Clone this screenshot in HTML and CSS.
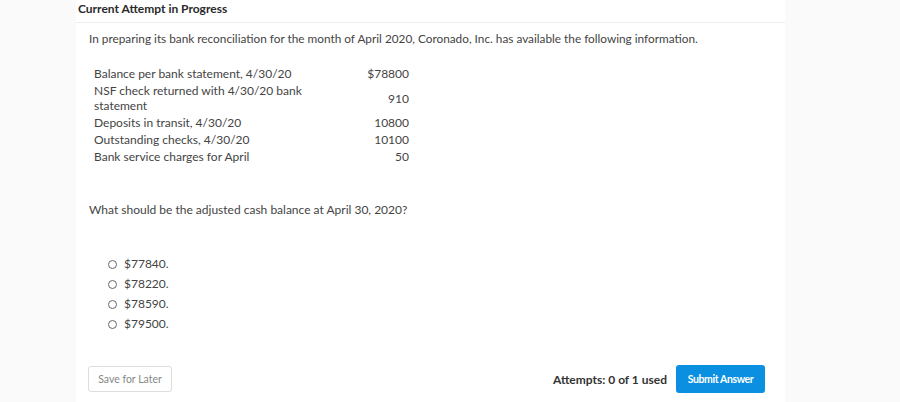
FILE: index.html
```html
<!DOCTYPE html>
<html lang="en">
<head>
    <meta charset="UTF-8">
    <title>Current Attempt in Progress</title>
    <link rel="stylesheet" href="styles.css">
</head>
<body>
    <div class="panel">
        <div class="attempt-title">Current Attempt in Progress</div>

        <div class="question">
            <p class="intro">In preparing its bank reconciliation for the month of April 2020, Coronado, Inc. has available the following information.</p>

            <table class="facts">
                <tr><td class="label">Balance per bank statement, 4/30/20</td><td class="amount">$78800</td></tr>
                <tr><td class="label">NSF check returned with 4/30/20 bank statement</td><td class="amount">910</td></tr>
                <tr><td class="label">Deposits in transit, 4/30/20</td><td class="amount">10800</td></tr>
                <tr><td class="label">Outstanding checks, 4/30/20</td><td class="amount">10100</td></tr>
                <tr><td class="label">Bank service charges for April</td><td class="amount">50</td></tr>
            </table>

            <p class="prompt">What should be the adjusted cash balance at April 30, 2020?</p>

            <ul class="choices">
                <li><span class="radio"></span>$77840.</li>
                <li><span class="radio"></span>$78220.</li>
                <li><span class="radio"></span>$78590.</li>
                <li><span class="radio"></span>$79500.</li>
            </ul>
        </div>

        <div class="footer">
            <button class="save">Save for Later</button>
            <div class="submit-area">
                <span class="attempts">Attempts: 0 of 1 used</span>
                <button class="submit">Submit Answer</button>
            </div>
        </div>
    </div>
</body>
</html>
```

FILE: styles.css
```css
body {
    margin: 0;
    background-color: #fafafa;
    font-family: Lato, "Open Sans", sans-serif;
    color: #333;
}
.panel {
    margin-left: 76px;
    width: 709px;
    height: 402px;
    background-color: #fff;
}
.attempt-title {
    font-size: 12px;
    font-weight: 700;
    color: #2a2a2a;
    padding: 1px 2px 0 2px;
    height: 23px;
    box-sizing: border-box;
    border-bottom: 1px solid #eeeeee;
}
.question {
    padding-left: 13px;
    font-size: 12px;
    color: #444;
}
.intro {
    margin: 8px 0 19px 0;
    font-size: 11.8px;
    line-height: 15px;
}
.facts {
    border-collapse: collapse;
    margin-left: 5px;
}
.facts td {
    padding: 1px 0;
    line-height: 15px;
    vertical-align: middle;
}
.facts .label {
    width: 215px;
}
.facts .amount {
    width: 100px;
    text-align: right;
}
.prompt {
    margin: 37px 0 0 0;
    line-height: 15px;
}
.choices {
    list-style: none;
    margin: 37px 0 0 0;
    padding-left: 19px;
}
.choices li {
    height: 20px;
    line-height: 20px;
    display: flex;
    align-items: center;
}
.radio {
    width: 7px;
    height: 7px;
    border: 1px solid #666;
    border-radius: 50%;
    margin-right: 7px;
}
.footer {
    display: flex;
    justify-content: space-between;
    align-items: center;
    padding: 31px 20px 0 12px;
}
button {
    font-family: Lato, "Open Sans", sans-serif;
    cursor: pointer;
}
.save {
    background-color: #fff;
    border: 1px solid #ddd;
    border-radius: 3px;
    color: #888;
    font-size: 10.5px;
    height: 26px;
    width: 84px;
    padding: 0;
}
.submit-area {
    display: flex;
    align-items: center;
    gap: 9px;
}
.attempts {
    font-size: 12px;
    font-weight: 700;
    color: #333;
}
.submit {
    background-color: #0b8fe1;
    border: none;
    border-radius: 3px;
    color: #fff;
    font-size: 10.5px;
    font-weight: 700;
    letter-spacing: -0.4px;
    height: 28px;
    width: 89px;
    padding: 0;
}
```
